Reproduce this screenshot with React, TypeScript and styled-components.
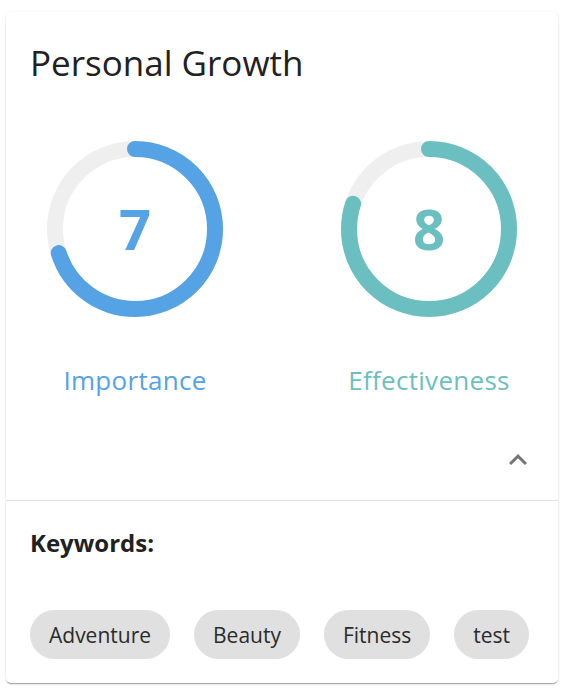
import React from "react";
import styled, { createGlobalStyle } from "styled-components";

const Global = createGlobalStyle`
  html, body { margin: 0; padding: 0; background: #ffffff; }
  body { font-family: "Open Sans", "Noto Sans", sans-serif; }
`;

const Page = styled.div`
  padding: 12px 9px 4px 6px;
`;

const Card = styled.section`
  width: 552px;
  background: #fff;
  border-radius: 5px;
  box-shadow: 0 2px 1px -1px rgba(0,0,0,0.2), 0 1px 1px 0 rgba(0,0,0,0.14), 0 1px 3px 0 rgba(0,0,0,0.12);
  overflow: hidden;
`;

const Top = styled.div`
  padding: 31px 24px 0 24px;
  display: flex;
  flex-direction: column;
`;

const Title = styled.h1`
  margin: 0;
  font-size: 35px;
  line-height: 40px;
  font-weight: 400;
  color: #212121;
`;

const Gauges = styled.div`
  display: flex;
  justify-content: space-between;
  padding: 0 17px;
  margin-top: 58px;
`;

const GaugeItem = styled.div<{ $color: string }>`
  width: 176px;
  display: flex;
  flex-direction: column;
  align-items: center;
  color: ${(p) => p.$color};
`;

const Dial = styled.div`
  display: grid;
  width: 176px;
  height: 176px;
  & > * { grid-area: 1 / 1; }
`;

const Value = styled.div`
  display: flex;
  align-items: center;
  justify-content: center;
  font-size: 56px;
  font-weight: 700;
  line-height: 1;
  padding-bottom: 2px;
`;

const Label = styled.div`
  margin-top: 47px;
  font-size: 26px;
  letter-spacing: 0.3px;
  line-height: 32px;
  white-space: nowrap;
`;

const Actions = styled.div`
  display: flex;
  justify-content: flex-end;
  padding: 46px 0 22px 0;
  margin-right: -2px;
`;

const ExpandButton = styled.button`
  border: 0;
  background: transparent;
  padding: 0;
  width: 36px;
  height: 36px;
  display: flex;
  color: #757575;
  cursor: pointer;
`;

const Divider = styled.hr`
  margin: 0;
  border: 0;
  height: 1px;
  background: #e0e0e0;
`;

const Bottom = styled.div`
  padding: 26px 24px 24px 24px;
`;

const Heading = styled.div`
  font-size: 24px;
  line-height: 32px;
  font-weight: 700;
  color: #212121;
`;

const Chips = styled.div`
  margin-top: 51px;
  display: flex;
  flex-wrap: wrap;
  gap: 24px;
`;

const Chip = styled.span`
  display: inline-flex;
  align-items: center;
  height: 49px;
  padding: 0 19px;
  border-radius: 25px;
  background: #e0e0e0;
  color: #2b2b2b;
  font-size: 21px;
`;

const R = 80;
const C = 2 * Math.PI * R;

function Gauge({ value, label, color }: { value: number; label: string; color: string }) {
  const len = (value / 10) * C;
  return (
    <GaugeItem $color={color}>
      <Dial>
        <svg width="176" height="176" viewBox="0 0 176 176">
          <circle cx="88" cy="88" r={R} fill="none" stroke="#efefef" strokeWidth="16" />
          <circle
            cx="88"
            cy="88"
            r={R}
            fill="none"
            stroke={color}
            strokeWidth="16"
            strokeLinecap="round"
            strokeDasharray={`${len} ${C}`}
            transform="rotate(-90 88 88)"
          />
        </svg>
        <Value>{value}</Value>
      </Dial>
      <Label>{label}</Label>
    </GaugeItem>
  );
}

export default function App() {
  return (
    <>
      <Global />
      <Page>
        <Card>
          <Top>
            <Title>Personal Growth</Title>
            <Gauges>
              <Gauge value={7} label="Importance" color="#55a3e4" />
              <Gauge value={8} label="Effectiveness" color="#6bbfc0" />
            </Gauges>
            <Actions>
              <ExpandButton aria-label="collapse">
                <svg width="36" height="36" viewBox="0 0 24 24" fill="currentColor">
                  <path d="M12 8l-6 6 1.41 1.41L12 10.83l4.59 4.58L18 14z" />
                </svg>
              </ExpandButton>
            </Actions>
          </Top>
          <Divider />
          <Bottom>
            <Heading>Keywords:</Heading>
            <Chips>
              <Chip>Adventure</Chip>
              <Chip>Beauty</Chip>
              <Chip>Fitness</Chip>
              <Chip>test</Chip>
            </Chips>
          </Bottom>
        </Card>
      </Page>
    </>
  );
}
